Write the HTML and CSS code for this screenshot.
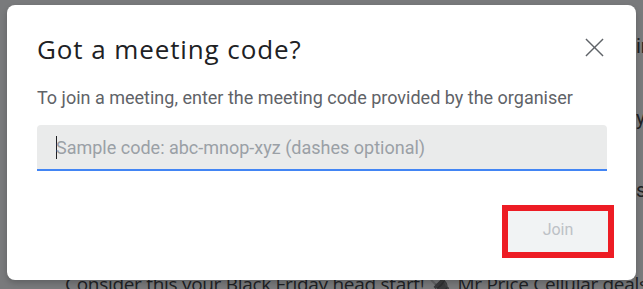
FILE: index.html
```html
<!DOCTYPE html>
<html>
<head>
<meta charset="utf-8">
<link rel="stylesheet" href="styles.css">
</head>
<body>
<div class="page">
  <div class="page-side">
    <span>in</span>
    <span>y</span>
    <span>s</span>
  </div>
  <p class="page-line">Consider this your Black Friday head start! 🔌 Mr Price Cellular deals ov</p>
</div>
<div class="scrim"></div>
<div class="dialog" role="dialog">
  <div class="dialog-head">
    <h1 class="dialog-title">Got a meeting code?</h1>
    <button class="close-btn" aria-label="Close">
      <svg width="20" height="20" viewBox="0 0 20 20"><path d="M1 1 19 19M19 1 1 19" stroke="#5f6368" stroke-width="1.5" fill="none"/></svg>
    </button>
  </div>
  <p class="dialog-text">To join a meeting, enter the meeting code provided by the organiser</p>
  <div class="field">
    <span class="caret"></span>
    <span class="placeholder">Sample code: abc-mnop-xyz (dashes optional)</span>
  </div>
  <div class="actions">
    <div class="highlight">
      <button class="join-btn">Join</button>
    </div>
  </div>
</div>
</body>
</html>
```
FILE: styles.css
```css
html, body {
  margin: 0;
  padding: 0;
  width: 643px;
  height: 289px;
  overflow: hidden;
}
body {
  background: #ffffff;
  font-family: Roboto, "Liberation Sans", sans-serif;
  position: relative;
}
.page {
  width: 643px;
  height: 289px;
  position: relative;
  overflow: hidden;
}
.page-line {
  position: absolute;
  left: 65px;
  top: 271px;
  margin: 0;
  font-family: "Open Sans", sans-serif;
  font-size: 19px;
  letter-spacing: -0.3px;
  color: #202124;
  white-space: nowrap;
}
.page-side {
  position: absolute;
  left: 636px;
  top: 34px;
  display: flex;
  flex-direction: column;
  gap: 48px;
  font-size: 20px;
  color: #202124;
}
.scrim {
  position: absolute;
  inset: 0;
  background: rgba(32, 33, 36, 0.6);
}
.dialog {
  position: absolute;
  left: 7px;
  top: 5px;
  width: 629px;
  height: 275px;
  box-sizing: border-box;
  background: #ffffff;
  border-radius: 8px;
  padding: 26px 29px 0 30px;
  box-shadow: 0 3px 6px rgba(0,0,0,0.2);
}
.dialog-head {
  display: flex;
  align-items: center;
  justify-content: space-between;
  height: 36px;
}
.dialog-title {
  margin: 0;
  font-family: "Open Sans", Roboto, sans-serif;
  font-weight: 400;
  font-size: 26px;
  letter-spacing: 0.9px;
  color: #202124;
}
.close-btn {
  background: none;
  border: 0;
  padding: 0 0 4px;
  margin-right: -7px;
  width: 40px;
  height: 40px;
  display: flex;
  align-items: center;
  justify-content: center;
}
.close-btn svg {
  width: 19px;
  height: 19px;
}
.dialog-text {
  margin: 19px 0 0;
  font-size: 18px;
  line-height: 24px;
  color: #5f6368;
}
.field {
  margin-top: 15px;
  height: 46px;
  box-sizing: border-box;
  background: #eaebeb;
  border-radius: 4px 4px 0 0;
  border-bottom: 2px solid #4285f4;
  display: flex;
  align-items: center;
  padding-left: 19px;
}
.caret {
  width: 1px;
  height: 23px;
  background: #202124;
  margin-right: -1px;
}
.placeholder {
  font-size: 18px;
  color: #9aa0a6;
  white-space: nowrap;
}
.actions {
  display: flex;
  justify-content: flex-end;
  margin-top: 34px;
  margin-right: -7px;
}
.highlight {
  border: 6px solid #ed1c24;
  display: flex;
}
.join-btn {
  width: 100px;
  height: 41px;
  border: 0;
  border-radius: 0;
  padding: 0 0 4px;
  background: #f1f3f4;
  color: #bdc1c6;
  font-family: Roboto, sans-serif;
  font-size: 16px;
}
```
